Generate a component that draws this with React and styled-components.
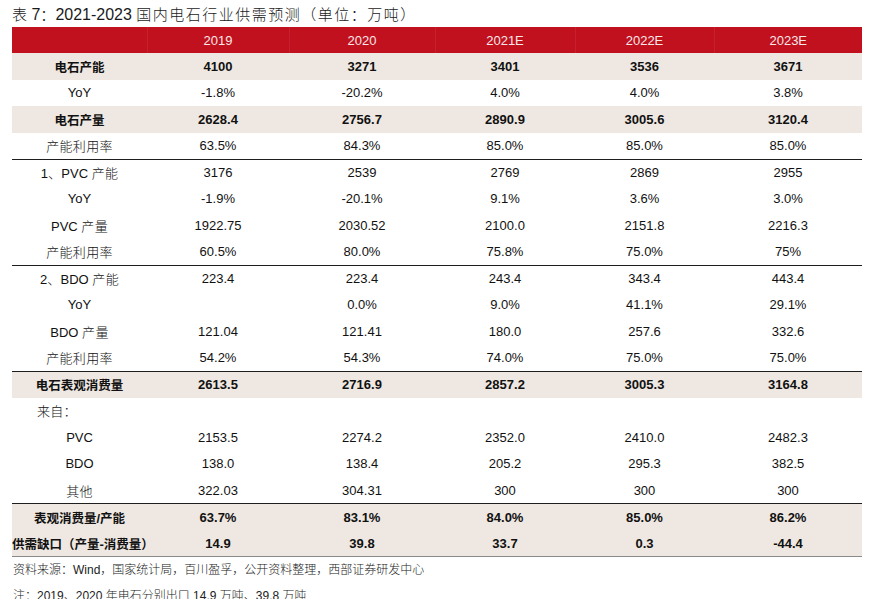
import React from "react";
import styled, { createGlobalStyle } from "styled-components";

const Global = createGlobalStyle`
  html, body { margin: 0; padding: 0; background: #fff; }
  body { font-family: "Liberation Sans", Arial, "Noto Sans CJK SC", sans-serif; color: #111; }
`;

const Page = styled.div`
  width: 889px;
  height: 599px;
  overflow: hidden;
  padding-left: 12px;
  box-sizing: border-box;
`;

const Title = styled.div`
  height: 27px;
  line-height: 28px;
  font-size: 16px;
  color: #1a1a1a;
  white-space: nowrap;
  font-family: "Liberation Sans", "Noto Sans CJK SC", sans-serif;
`;

const Cjk = styled.span`
  font-family: "Noto Sans CJK SC", sans-serif;
  font-size: ${(p) => p.$size || "15px"};
  letter-spacing: ${(p) => p.$ls || "0px"};
  font-weight: ${(p) => (p.$bold ? 700 : 300)};
`;

const Table = styled.table`
  width: 850px;
  border-collapse: collapse;
  table-layout: fixed;
`;

const HeadRow = styled.tr`
  height: 26px;
  background: #c1101e;
`;

const HeadCell = styled.th`
  padding: 0;
  font-weight: 400;
  font-size: 13px;
  color: #f7e8e8;
  text-align: center;
  border-left: 1px solid rgba(255, 255, 255, 0.07);
  &:first-child { border-left: none; }
`;

const Row = styled.tr`
  height: 26.5px;
  background: ${(p) => (p.$shaded ? "#efe8e2" : "#fff")};
  border-top: ${(p) => (p.$rule ? "1px solid #1e1e1e" : "none")};
  border-bottom: ${(p) => (p.$last ? "1.5px solid #8a8a8a" : "none")};
`;

const Cell = styled.td`
  padding: 0;
  font-size: 13px;
  text-align: center;
  font-weight: ${(p) => (p.$bold ? 700 : 400)};
  color: #111;
  white-space: nowrap;
`;

const LabelCell = styled(Cell)`
  text-align: ${(p) => (p.$left ? "left" : "center")};
  padding-left: ${(p) => (p.$left ? "25px" : "0")};
`;

const Notes = styled.div`
  font-size: 12px;
  color: #222;
`;

const NoteLine = styled.div`
  height: ${(p) => p.$h || "24px"};
  line-height: 24px;
  white-space: nowrap;
  padding-left: 1px;
`;

const rows = [
  { label: ["电石产能"], vals: ["4100", "3271", "3401", "3536", "3671"], bold: true, shaded: true },
  { label: ["YoY"], vals: ["-1.8%", "-20.2%", "4.0%", "4.0%", "3.8%"] },
  { label: ["电石产量"], vals: ["2628.4", "2756.7", "2890.9", "3005.6", "3120.4"], bold: true, shaded: true },
  { label: ["产能利用率"], vals: ["63.5%", "84.3%", "85.0%", "85.0%", "85.0%"] },
  { label: ["1、PVC ", "产能"], vals: ["3176", "2539", "2769", "2869", "2955"], rule: true },
  { label: ["YoY"], vals: ["-1.9%", "-20.1%", "9.1%", "3.6%", "3.0%"] },
  { label: ["PVC ", "产量"], vals: ["1922.75", "2030.52", "2100.0", "2151.8", "2216.3"] },
  { label: ["产能利用率"], vals: ["60.5%", "80.0%", "75.8%", "75.0%", "75%"] },
  { label: ["2、BDO ", "产能"], vals: ["223.4", "223.4", "243.4", "343.4", "443.4"], rule: true },
  { label: ["YoY"], vals: ["", "0.0%", "9.0%", "41.1%", "29.1%"] },
  { label: ["BDO ", "产量"], vals: ["121.04", "121.41", "180.0", "257.6", "332.6"] },
  { label: ["产能利用率"], vals: ["54.2%", "54.3%", "74.0%", "75.0%", "75.0%"] },
  { label: ["电石表观消费量"], vals: ["2613.5", "2716.9", "2857.2", "3005.3", "3164.8"], bold: true, shaded: true, rule: true },
  { label: ["来自："], vals: ["", "", "", "", ""], left: true },
  { label: ["PVC"], vals: ["2153.5", "2274.2", "2352.0", "2410.0", "2482.3"] },
  { label: ["BDO"], vals: ["138.0", "138.4", "205.2", "295.3", "382.5"] },
  { label: ["其他"], vals: ["322.03", "304.31", "300", "300", "300"] },
  { label: ["表观消费量/产能"], vals: ["63.7%", "83.1%", "84.0%", "85.0%", "86.2%"], bold: true, shaded: true, rule: true },
  { label: ["供需缺口（产量-消费量）"], vals: ["14.9", "39.8", "33.7", "0.3", "-44.4"], bold: true, shaded: true, last: true },
];

const isCjk = (s) => /[\u3000-\u9fff\uff00-\uffef]/.test(s);

function Label({ parts, bold }) {
  return parts.map((p, i) => {
    const segs = p.split(/([\u3000-\u9fff\uff00-\uffef]+)/).filter(Boolean);
    return segs.map((s, j) =>
      isCjk(s) ? (
        <Cjk key={`${i}-${j}`} $size={bold ? "12.5px" : "13px"} $ls={bold ? "0px" : "0.3px"} $bold={bold}>
          {s}
        </Cjk>
      ) : (
        <span key={`${i}-${j}`}>{s}</span>
      )
    );
  });
}

const widths = [135, 142, 146, 140, 139, 148];

export default function App() {
  return (
    <>
      <Global />
      <Page>
        <Title>
          <Cjk $size="15px">表</Cjk> 7<Cjk $size="15px">：</Cjk>2021-2023{" "}
          <Cjk $size="15px" $ls="1.5px">国内电石行业供需预测（单位：万吨）</Cjk>
        </Title>
        <Table>
          <colgroup>
            {widths.map((w, i) => (
              <col key={i} style={{ width: w }} />
            ))}
          </colgroup>
          <thead>
            <HeadRow>
              <HeadCell />
              {["2019", "2020", "2021E", "2022E", "2023E"].map((h) => (
                <HeadCell key={h}>{h}</HeadCell>
              ))}
            </HeadRow>
          </thead>
          <tbody>
            {rows.map((r, i) => (
              <Row key={i} $shaded={r.shaded} $rule={r.rule} $last={r.last}>
                <LabelCell $bold={r.bold} $left={r.left}>
                  <Label parts={r.label} bold={r.bold} />
                </LabelCell>
                {r.vals.map((v, j) => (
                  <Cell key={j} $bold={r.bold}>
                    {v}
                  </Cell>
                ))}
              </Row>
            ))}
          </tbody>
        </Table>
        <Notes>
          <NoteLine $h="26px">
            <Cjk $size="12px">资料来源：</Cjk>Wind
            <Cjk $size="12px">，国家统计局，百川盈孚，公开资料整理，西部证券研发中心</Cjk>
          </NoteLine>
          <NoteLine>
            <Cjk $size="12px">注：</Cjk>2019
            <Cjk $size="12px">、</Cjk>2020 <Cjk $size="12px">年电石分别出口</Cjk> 14.9{" "}
            <Cjk $size="12px">万吨、</Cjk>39.8 <Cjk $size="12px">万吨</Cjk>
          </NoteLine>
        </Notes>
      </Page>
    </>
  );
}
